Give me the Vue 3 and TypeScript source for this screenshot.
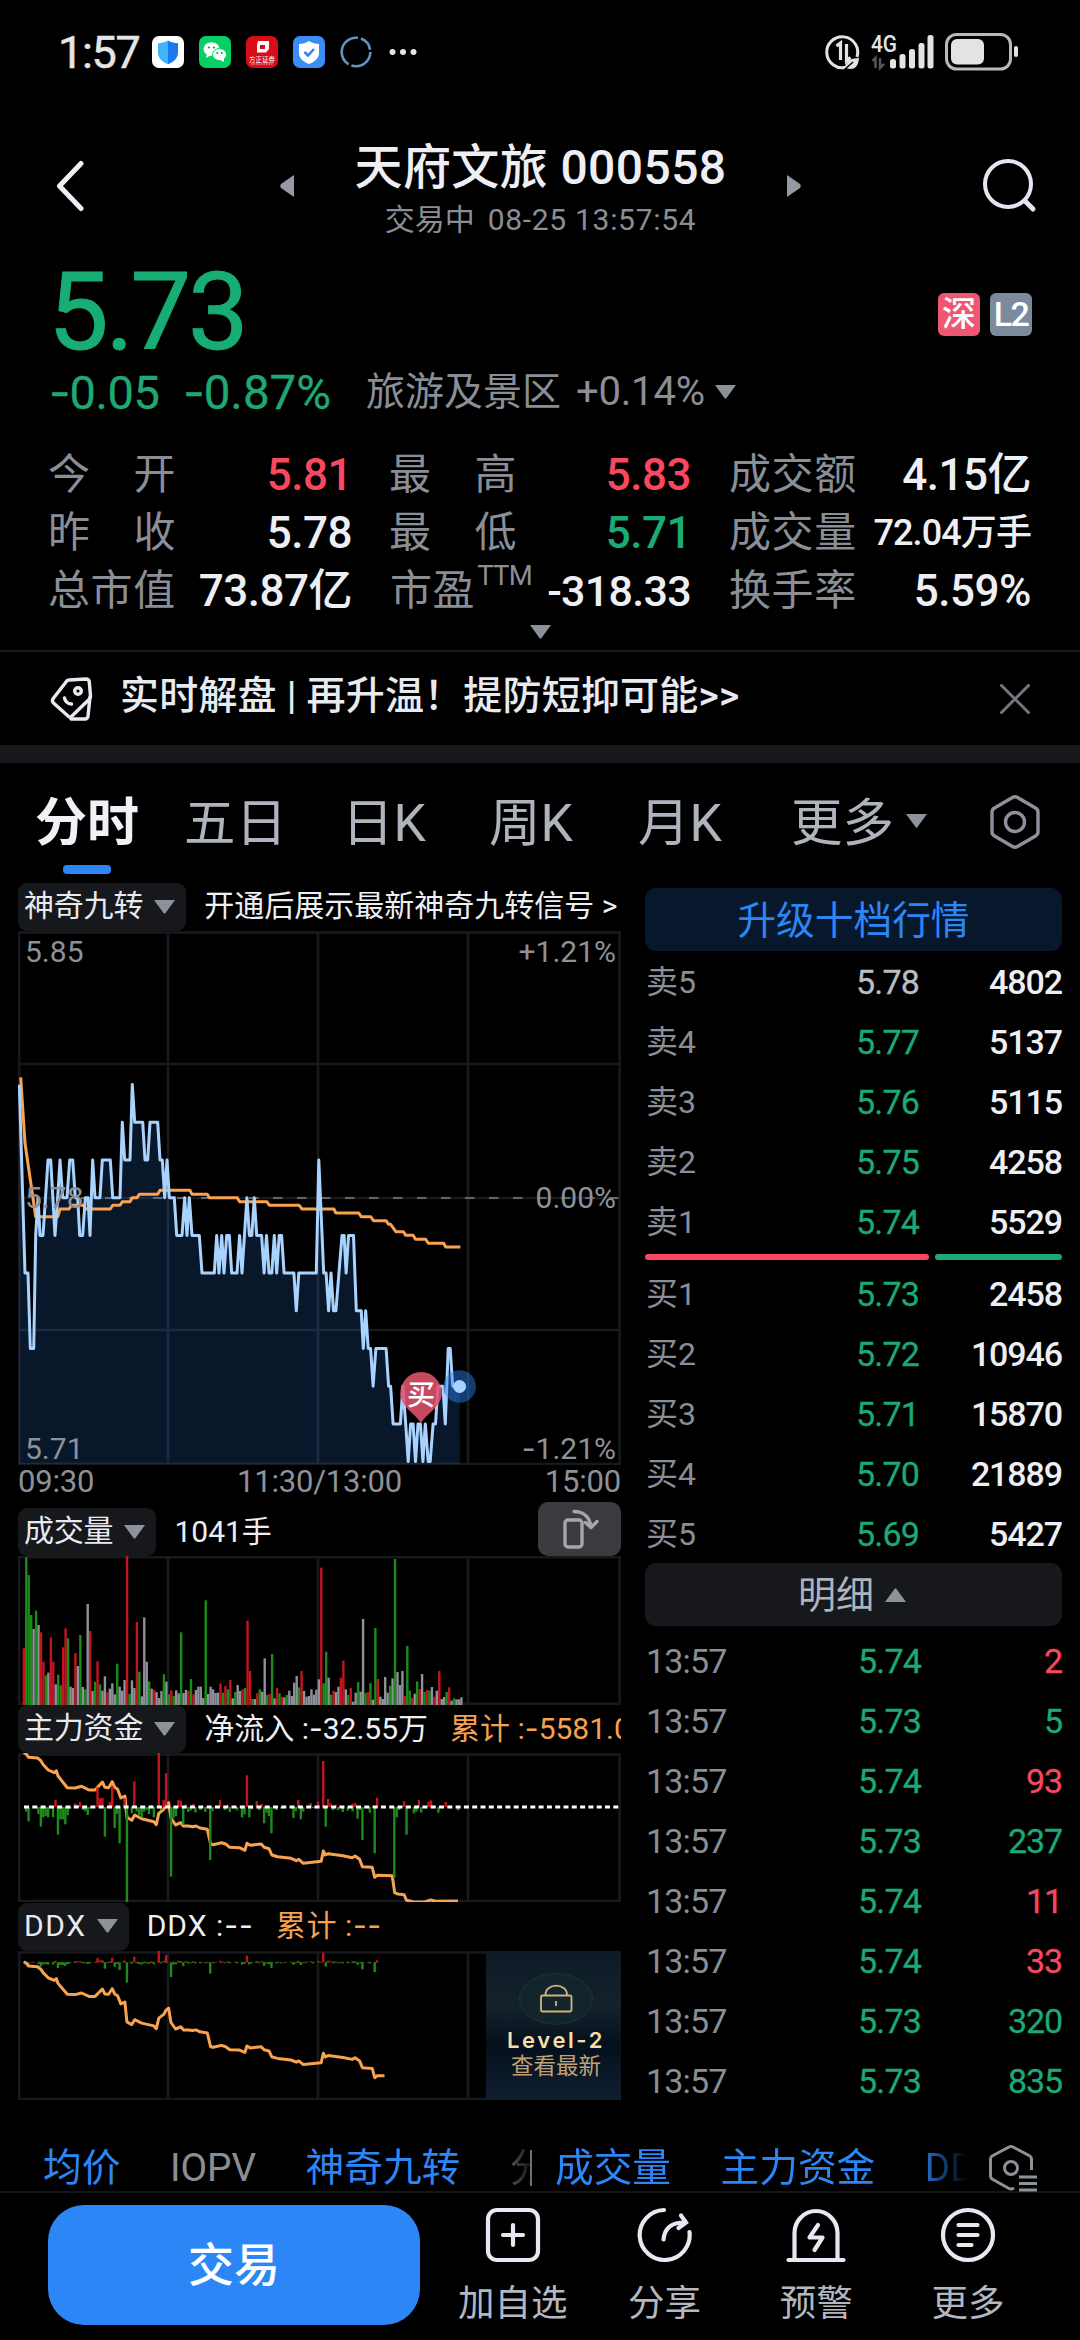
<script setup lang="ts">
interface Cell { label: string; value: string; tone: string; wide?: boolean; sup?: string; small?: boolean }
interface Level { name: string; price: string; qty: string; tone: string }
interface Bar { x: number; y: number; h: number; tone: string }

const cells: Cell[] = [
  { label: '今开', value: '5.81', tone: 'up', wide: true },
  { label: '最高', value: '5.83', tone: 'up', wide: true },
  { label: '成交额', value: '4.15亿', tone: 'plain' },
  { label: '昨收', value: '5.78', tone: 'plain', wide: true },
  { label: '最低', value: '5.71', tone: 'down', wide: true },
  { label: '成交量', value: '72.04万手', tone: 'plain', small: true },
  { label: '总市值', value: '73.87亿', tone: 'plain' },
  { label: '市盈', value: '-318.33', tone: 'plain', sup: 'TTM' },
  { label: '换手率', value: '5.59%', tone: 'plain' },
]

const asks: Level[] = [
  { name: '卖5', price: '5.78', qty: '4802', tone: 'flat' },
  { name: '卖4', price: '5.77', qty: '5137', tone: 'down' },
  { name: '卖3', price: '5.76', qty: '5115', tone: 'down' },
  { name: '卖2', price: '5.75', qty: '4258', tone: 'down' },
  { name: '卖1', price: '5.74', qty: '5529', tone: 'down' },
]
const bids: Level[] = [
  { name: '买1', price: '5.73', qty: '2458', tone: 'down' },
  { name: '买2', price: '5.72', qty: '10946', tone: 'down' },
  { name: '买3', price: '5.71', qty: '15870', tone: 'down' },
  { name: '买4', price: '5.70', qty: '21889', tone: 'down' },
  { name: '买5', price: '5.69', qty: '5427', tone: 'down' },
]
const ticks = [
  { price: '5.74', qty: '2', tone: 'up' },
  { price: '5.73', qty: '5', tone: 'down' },
  { price: '5.74', qty: '93', tone: 'up' },
  { price: '5.73', qty: '237', tone: 'down' },
  { price: '5.74', qty: '11', tone: 'up' },
  { price: '5.74', qty: '33', tone: 'up' },
  { price: '5.73', qty: '320', tone: 'down' },
  { price: '5.73', qty: '835', tone: 'down' },
]

const pairs = (s: string): number[][] => s.trim().split(/\s+/).map((p) => p.split(',').map(Number))
const join = (pts: number[][]): string => pts.map(([x, y]) => `${x.toFixed(1)},${y.toFixed(1)}`).join(' ')

/* Intraday price: time offset, cents away from the previous close. */
const CENT = 37.7
const morning = pairs(`58,3 75,-2 84,-2 91,-4 101,-4 107,-1 114,0 120,-1 129,-1 144,1 152,1 165,-1 173,0 180,1 188,0
 201,0 209,1 218,1 226,0 233,0 239,-1 248,-1 256,0 264,0 270,-1 278,1 285,0 300,0 307,1 331,1 338,0 360,0 367,2 374,1 390,1
 397,3 404,2 428,2 435,1 443,1 450,2 473,2 480,1 487,1 494,0 501,1 508,0 523,0 530,-1 546,-1 554,0 561,-1 568,0 576,-1 598,-1
 606,-2 643,-2 650,-1 657,-2 665,-1 672,-2 680,-1 688,-1 695,-2 711,-2`).map(([x, l]) => [x / 3, 1197.7 - l * CENT])
const later = pairs(`587,-1 593,-2 605,0 611,-1 617,-1 623,0 629,-1 641,-1 647,-2 653,-1 659,-2 666,-2 672,-1 678,-2 684,-1 690,-1
 696,-2 720,-2 726,-3 732,-2 775,-2 781,1 793,-2 799,-2 805,-3 811,-2 817,-3 823,-3 838,-1 843,-1 848,-2 854,-1 866,-1 873,-3
 885,-3 890,-4 896,-3 902,-4 908,-4 914,-5 921,-4 946,-4 952,-5 957,-5 963,-6 981,-6 987,-5 994,-6 1000,-7 1006,-6 1012,-6
 1018,-7 1024,-6 1030,-6 1036,-7 1042,-6 1049,-7 1054,-7 1061,-6 1067,-6 1073,-5 1085,-5 1091,-6 1098,-4 1103,-4 1109,-5 1126,-5`)
  .map(([x, l]) => [x / 2.45, 1197.7 - l * CENT])
const pricePts = [...morning, ...later]
const priceLine = join(pricePts)
const priceArea = `19,1464 ${priceLine} 460,1464`

const avgLine = join([
  ...pairs(`62,52 75,250 107,470 173,470 180,447 207,447 214,436 250,436 257,447 331,447 338,436 360,436 367,425 390,425
 397,413 411,413 418,403 473,403 480,391 570,391 576,403 622,403 628,413 712,413`).map(([x, y]) => [x / 3, 1060 + y / 3]),
  ...pairs(`587,65 654,65 660,76 733,76 740,87 818,87 823,99 879,99 885,110 908,110 915,122 946,122 952,133 957,133 970,155
 988,155 994,166 1012,166 1018,178 1043,178 1049,190 1087,190 1092,201 1128,201`).map(([x, y]) => [x / 2.45, 1180 + y / 3]),
])

/* One bar per minute: depth of the bar top, then r / g / w for rise, fall, flat. */
const volumes: Bar[] = `475r 202g 255g 375g 417w 362g 405w 427r 515r 556g 548w 442r 515r 583w 554g 586g 472r 415r 445g 590w
 594w 489r 528w 435g 591w 598g 342w 423r 603w 575g 514r 583g 602w 559w 607r 596w 580w 613w 521g 590w
 602w 570w 195r 612g 571w 594w 396r 545g 619w 382w 515w 574g 596w 600r 606w 624w 603w 553g 575w 613g
 601r 618g 601w 610w 427g 609w 600w 602r 567g 613r 600w 590w 590w 624w 331g 612w 590w 598w 609w 608w
 580r 608g 588r 598g 570r 625w 606g 585w 603w 598r 594g 392r 543r 627g 627w 610r 598g 605w 505w 615g
 612r 492g 625w 594r 610g 621r 622w 615g 602w 618w 578w 558w 592g 543r 603w 620w 618w 598w 614w 599w
 568w 233r 580g 485g 563w 614g 602r 606w 590w 563r 512r 598w 615g 594r 635w 608w 576g 605w 387w 609g
 606r 579g 629w 414g 567r 620w 627w 561w 608w 587g 565w 207g 546w 585w 543w 618r 468g 602g 624r 611w
 574g 597r 552w 606g 600r 602g 591w 620r 602w 543r 627w 621w 606g 592r 632w 625g 628w 628w 622w`
  .split(/\s+/).map((t, i) => {
    const h = (645 - parseInt(t, 10)) / 3
    return { x: 22.6 + i * 2.4585, y: 1705 - h, h, tone: t.slice(-1) }
  })

/* Net inflow per minute around the zero line. */
const flowRaw = pairs(`136,210 184,220 190,224 196,216 239,172 245,205 251,203 269,216 275,168 305,205 329,154 371,225 389,69
 401,210 407,130 437,210 443,212 455,224 473,222 539,210 557,224 605,136 629,213 641,222 731,210 761,219 779,215 792,93 804,207
 810,220 822,224 864,222 870,219 924,203 990,214 1026,210 1050,215 1056,211 1092,216 64,245 70,274 94,252 100,290 106,262
 112,258 118,262 130,262 142,314 148,268 154,268 160,283 166,256 172,236 203,240 209,244 215,255 221,236 257,320 263,234
 281,294 287,252 293,340 311,518 323,250 335,244 341,256 347,262 353,245 359,240 365,252 377,262 395,240 419,440 425,264
 431,258 449,284 461,246 467,242 479,248 491,240 503,246 515,390 521,244 551,240 563,246 581,241 593,262 599,253 611,262
 617,238 635,240 647,280 653,248 659,258 665,310 677,240 689,236 719,264 725,244 737,268 743,245 767,234 798,290 816,241
 828,240 840,246 852,242 864,244 876,266 882,240 888,330 906,248 918,370 966,444 972,262 978,240 996,314 1014,250 1020,245
 1032,248 1074,248 1122,241`)
const around = (zero: number, scale: number, limit: number): Bar[] =>
  flowRaw.filter(([x]) => x <= limit).map(([x, y]) => {
    const h = Math.max((Math.abs(y - 231) / 3) * scale, 1)
    return { x: x / 2.45 - 1.2, y: y < 231 ? zero - h : zero, h, tone: y < 231 ? 'r' : 'g' }
  })
const flowBars = around(1807, 1, 1200)
const ddxBars = around(1962.3, 0.213, 930)

const cumRaw = pairs(`58,68 64,72 70,82 92,84 100,92 106,104 118,120 133,128 138,122 142,138 165,173 184,174 200,169 218,180
 233,180 251,156 257,172 266,173 275,155 281,172 288,178 296,204 306,198 311,262 323,271 330,255 347,266 377,275 383,284
 389,250 401,238 407,224 413,218 419,264 430,285 443,278 449,288 461,288 472,290 480,288 490,294 508,298 516,342 522,344
 543,338 553,342 563,352 587,353 600,361 605,340 613,346 640,342 647,352 659,356 666,375 680,380 713,385 726,392 732,388
 743,400 787,394 792,363 797,375 804,371 840,377 863,383 870,378 881,388 888,410 912,412 918,442 924,436 961,437 967,488
 975,492 990,494 996,511 1012,515 1040,516 1056,510 1067,514 1122,513`)
const cumLine = join(cumRaw.map(([x, y]) => [x / 2.45, 1730 + y / 3]))
const ddxLine = join(cumRaw.filter(([x]) => x < 961).concat([[942, 436]])
  .map(([x, y]) => [x / 2.45, 1730 + (697 + (y - 70) * 0.93) / 3]))

const columns = [168, 318, 468]
</script>

<template>
  <div class="screen">
    <header class="status">
      <div class="status-left">
        <span class="clock">1:57</span>
        <svg class="app" viewBox="0 0 32 32"><rect width="32" height="32" rx="7" fill="#fff" /><path d="M16 4.500c3.400 2 6.600 2.500 10 2.800v9c0 6-4 9.500-10 12z" fill="#1b78ee" /><path d="M16 4.500c-3.400 2-6.600 2.500-10 2.800v9c0 6 4 9.500 10 12z" fill="#40b4f8" /></svg>
        <svg class="app" viewBox="0 0 32 32"><rect width="32" height="32" rx="7" fill="#06cf66" /><ellipse cx="12.500" cy="13" rx="8" ry="6.700" fill="#fff" /><path d="M7 22l1-5 4 2z" fill="#fff" /><ellipse cx="20.500" cy="18.500" rx="7" ry="6" fill="#fff" stroke="#06cf66" /><path d="M25 26l-4-2 4-2z" fill="#fff" /><circle cx="10" cy="11.500" r="1.100" fill="#06a050" /><circle cx="15" cy="11.500" r="1.100" fill="#06a050" /><circle cx="18.300" cy="17" r="1" fill="#06a050" /><circle cx="22.700" cy="17" r="1" fill="#06a050" /></svg>
        <svg class="app" viewBox="0 0 32 32"><rect width="32" height="32" rx="7" fill="#d80d18" /><path d="M12 5h11v8l-3 3.500h-9V9z" fill="#fff" /><path d="M14 9h5v4h-5z" fill="#d80d18" /><text x="16" y="25.500" font-size="6.500" fill="#fff" text-anchor="middle">方正证券</text><path d="M5 28h22" stroke="#fff" stroke-width=".8" stroke-dasharray="1.500 1" /></svg>
        <svg class="app" viewBox="0 0 32 32"><rect width="32" height="32" rx="7" fill="#3b8cf5" /><path d="M16 5c3 2 6.500 2.800 10 3v9c0 5.500-4.500 9-10 11-5.500-2-10-5.500-10-11V8c3.500-.2 7-1 10-3z" fill="#fff" /><path d="M11.500 16l3.500 3.500 6-6.500" fill="none" stroke="#2f7fee" stroke-width="2.500" /></svg>
        <svg class="app" viewBox="0 0 32 32"><circle cx="16" cy="16" r="14.300" fill="none" stroke="#6593bd" stroke-width="2.600" stroke-dasharray="27 3 39 3 15 2.800" /></svg>
        <svg class="dots" viewBox="0 0 28 8"><circle cx="3.500" cy="4" r="3" /><circle cx="14" cy="4" r="3" /><circle cx="24.500" cy="4" r="3" /></svg>
      </div>
      <svg class="status-right" viewBox="822 30 198 42">
        <g fill="none" stroke="#e3e3e3" stroke-width="3">
          <path d="M857 56A15.500 15.500 0 1 0 846 66.300" />
          <path d="M836.500 45l4-3v17M846.500 43v17l4-3.500" stroke-width="3.200" />
          <rect x="946.500" y="33.500" width="64" height="34.500" rx="10" stroke="#b9b9b9" />
        </g>
        <path d="M845 67c0-6 5-10 14-10-.5 8-4 11-9 11z" fill="#e3e3e3" /><path d="M844 69l9-8" stroke="#000" stroke-width="1.500" />
        <text x="871" y="51" font-size="23" font-weight="500" fill="#e3e3e3" textLength="26" lengthAdjust="spacingAndGlyphs">4G</text>
        <path d="M872.500 60l3-3v10M880 57v10l4-4" fill="none" stroke="#555" stroke-width="2.500" />
        <g fill="#e3e3e3"><rect x="890" y="58" width="6" height="9.500" rx="2.500" /><rect x="899.500" y="53" width="6" height="14.500" rx="2.500" /><rect x="909" y="48" width="6" height="19.500" rx="2.500" /><rect x="918.500" y="42" width="6" height="25.500" rx="2.500" /><rect x="927.500" y="34" width="6" height="33.500" rx="2.500" /><rect x="951" y="38" width="33" height="25.500" rx="6" /><rect x="1014" y="45" width="4" height="11" rx="2" /></g>
      </svg>
    </header>

    <nav class="nav">
      <svg class="back" viewBox="0 0 30 52"><path d="M26 3.500L4.500 26 26 48.500" fill="none" stroke="#eff0f5" stroke-width="5" stroke-linecap="round" stroke-linejoin="round" /></svg>
      <svg class="side" viewBox="0 0 14 22"><path d="M14 0v22L1 13q-1.500-2 0-4z" /></svg>
      <div class="title">
        <h1>天府文旅 000558</h1>
        <p>交易中<span>08-25 13:57:54</span></p>
      </div>
      <svg class="side" viewBox="0 0 14 22"><path d="M0 0v22L13 13q1.500-2 0-4z" /></svg>
      <svg class="search" viewBox="0 0 56 56"><circle cx="26" cy="26" r="23" fill="none" stroke="#e2e7f1" stroke-width="4" /><path d="M43 43l8 8" stroke="#e2e7f1" stroke-width="5" stroke-linecap="round" /></svg>
    </nav>

    <section class="quote">
      <div class="price-row">
        <strong>5.73</strong>
        <div class="badges"><span class="sz">深</span><span class="l2">L2</span></div>
      </div>
      <div class="change-row">
        <span class="delta"><i class="dash">-</i>0.05</span><span class="delta pct"><i class="dash">-</i>0.87%</span>
        <span class="sector">旅游及景区</span><span class="sector-pct">+0.14%</span>
        <svg class="tri" viewBox="0 0 21 14"><path d="M0 0h21L11.500 13q-1 1.500-2 0z" /></svg>
      </div>
      <div class="cells">
        <div v-for="c in cells" :key="c.label" class="cell">
          <span class="label" :class="{ wide: c.wide }">
            <template v-if="c.wide"><i>{{ c.label[0] }}</i><i>{{ c.label[1] }}</i></template>
            <template v-else>{{ c.label }}<sup v-if="c.sup">{{ c.sup }}</sup></template>
          </span>
          <b :class="[c.tone, { small: c.small, mid: c.sup }]">{{ c.value }}</b>
        </div>
      </div>
      <svg class="tri expand" viewBox="0 0 21 14"><path d="M0 0h21L11.500 13q-1 1.500-2 0z" /></svg>
    </section>

    <section class="notice">
      <svg class="tag" viewBox="0 0 44 46"><g fill="none" stroke="#e8eaf2" stroke-width="3.400" stroke-linejoin="round" stroke-linecap="round"><path d="M20 4l17-1q3 0 3.300 3l1.200 14q0 2-1 3L23 40q-2 2-4 0L4.500 27q-2-2-.3-4.500L17 6q1-2 3-2z" /><path d="M41 21l-2 19q-.5 3-3 3H22" /><circle cx="29" cy="15" r="3.300" /><path d="M15.500 22q1 5.500 7 6" /></g></svg>
      <span>实时解盘 | 再升温！提防短抑可能&gt;&gt;</span>
      <svg class="close" viewBox="0 0 30 30"><path d="M1.500 1.500l27 27m0-27l-27 27" stroke="#73777f" stroke-width="3" stroke-linecap="round" /></svg>
    </section>
    <div class="band"></div>

    <nav class="tabs">
      <span class="tab active">分时</span><span class="tab">五日</span><span class="tab">日K</span><span class="tab">周K</span><span class="tab">月K</span>
      <span class="tab more">更多<svg class="tri" viewBox="0 0 21 14"><path d="M0 0h21L11.500 13q-1 1.500-2 0z" /></svg></span>
      <svg class="hex" viewBox="0 0 52 56"><g fill="none" stroke="#8d9199" stroke-width="3.400" stroke-linejoin="round"><path d="M23.500 3.500q2.500-1.500 5 0l18 10.500q2.500 1.500 2.500 4v20q0 2.500-2.500 4l-18 10.500q-2.500 1.500-5 0l-18-10.500Q3 40.500 3 38V18q0-2.500 2.500-4z" /><circle cx="26" cy="28" r="9.500" /></g></svg>
    </nav>

    <main class="main">
      <div class="charts">
        <div class="bar-row first">
          <span class="pill">神奇九转<svg class="tri" viewBox="0 0 21 14"><path d="M0 0h21L11.500 13q-1 1.500-2 0z" /></svg></span>
          <span class="info">开通后展示最新神奇九转信号 &gt;</span>
        </div>
        <svg class="chart price" viewBox="18 931 603 534">
          <g class="grid"><rect x="19.200" y="932.500" width="600.400" height="531.500" /><path v-for="x in columns" :key="x" :d="`M${x} 933V1464`" /><path d="M19 1064H620M19 1198H620M19 1330H620" /></g>
          <path d="M81 1198H620" stroke="#62656c" stroke-width="2.200" stroke-dasharray="9.500 14.500" />
          <polygon :points="priceArea" fill="rgba(45,134,246,.17)" />
          <polyline :points="avgLine" class="avg" />
          <polyline :points="priceLine" class="px" />
          <g class="axis">
            <text x="25" y="962">5.85</text><text x="25" y="1208">5.78</text><text x="25" y="1459">5.71</text>
            <text x="616" y="962" text-anchor="end">+1.21%</text><text x="616" y="1208" text-anchor="end">0.00%</text><text x="616" y="1459" text-anchor="end"><tspan class="dash">-</tspan>1.21%</text>
          </g>
          <path d="M421 1423C415 1413 400.300 1407 400.300 1393a20.700 21 0 0 1 41.400 0C441.700 1407 427 1413 421 1423z" fill="#e0546d" fill-opacity=".88" />
          <text x="421" y="1404.500" text-anchor="middle" font-size="28" font-weight="500" fill="#fff">买</text>
          <circle cx="459.600" cy="1386.500" r="16.300" fill="#2d86f6" fill-opacity=".45" /><circle cx="459.600" cy="1386.500" r="6.500" fill="#a9d3ff" />
        </svg>
        <div class="times"><span>09:30</span><span>11:30/13:00</span><span>15:00</span></div>

        <div class="bar-row">
          <span class="pill">成交量<svg class="tri" viewBox="0 0 21 14"><path d="M0 0h21L11.500 13q-1 1.500-2 0z" /></svg></span>
          <span class="info">1041手</span>
          <span class="rotate"><svg viewBox="0 0 40 42"><g fill="none" stroke="#a5a7ac" stroke-width="3.400" stroke-linejoin="round" stroke-linecap="round"><rect x="5" y="12" width="17" height="27" rx="3" /><path d="M14 3.500c10 0 16 6 17 16M25.500 14.500l5.500 5 6-6" /></g></svg></span>
        </div>
        <svg class="chart sub" viewBox="18 1556 603 149">
          <g class="grid"><rect x="19.200" y="1557.200" width="600.400" height="146.500" /><path v-for="x in columns" :key="x" :d="`M${x} 1557V1704`" /></g>
          <rect v-for="(b, i) in volumes" :key="i" :x="b.x" :y="b.y" width="2.400" :height="b.h" :class="b.tone" />
        </svg>

        <div class="bar-row flow-row">
          <span class="pill">主力资金<svg class="tri" viewBox="0 0 21 14"><path d="M0 0h21L11.500 13q-1 1.500-2 0z" /></svg></span>
          <span class="info">净流入 :<i class="dash">-</i>32.55万</span><span class="info orange">累计 :<i class="dash">-</i>5581.0</span>
        </div>
        <svg class="chart sub" viewBox="18 1753 603 149">
          <g class="grid"><rect x="19.200" y="1754.500" width="600.400" height="146.500" /><path v-for="x in columns" :key="x" :d="`M${x} 1754V1902`" /></g>
          <polyline :points="cumLine" class="avg" />
          <rect v-for="(b, i) in flowBars" :key="i" :x="b.x" :y="b.y" width="2.400" :height="b.h" :class="b.tone" />
          <path d="M24 1807H621" stroke="#fff" stroke-width="2.800" stroke-dasharray="5 3.300" />
        </svg>

        <div class="bar-row ddx-row">
          <span class="pill">DDX<svg class="tri" viewBox="0 0 21 14"><path d="M0 0h21L11.500 13q-1 1.500-2 0z" /></svg></span>
          <span class="info">DDX :<i class="dash">--</i></span><span class="info orange">累计 :<i class="dash">--</i></span>
        </div>
        <div class="ddx">
          <svg class="chart ddx-plot" viewBox="18 1951 468 149">
            <path class="grid" d="M486 1952.500H19.200V2099H486M168 1952V2099M318 1952V2099M468 1952V2099" />
            <path d="M24 1962.300H380" stroke="#5e3a1c" stroke-width="1" stroke-dasharray="4 3" />
            <rect v-for="(b, i) in ddxBars" :key="i" :x="b.x" :y="b.y" width="2.400" :height="b.h" :class="b.tone" />
            <polyline :points="ddxLine" class="avg" />
          </svg>
          <div class="level2">
            <svg viewBox="0 0 76 54"><ellipse cx="38" cy="27" rx="36.500" ry="25.300" fill="#13252c" stroke="#1f3239" /><g fill="none" stroke="#d2b27d" stroke-width="1.800"><rect x="23" y="23.500" width="30.500" height="16" rx="1.500" /><path d="M27.500 23c0-12.500 21.500-12.500 21.500 0M38 29v5" /></g></svg>
            <strong>Level-2</strong><span>查看最新</span>
          </div>
        </div>
      </div>

      <aside class="book">
        <div class="upgrade">升级十档行情</div>
        <div class="rows">
          <div v-for="l in asks" :key="l.name" class="row"><span>{{ l.name }}</span><b :class="l.tone">{{ l.price }}</b><em>{{ l.qty }}</em></div>
        </div>
        <div class="ratio"><i></i><i></i></div>
        <div class="rows">
          <div v-for="l in bids" :key="l.name" class="row"><span>{{ l.name }}</span><b :class="l.tone">{{ l.price }}</b><em>{{ l.qty }}</em></div>
        </div>
        <div class="detail">明细<svg class="tri" viewBox="0 0 21 14"><path d="M0 14h21L11.500 1q-1-1.500-2 0z" /></svg></div>
        <div class="rows ticks">
          <div v-for="(t, i) in ticks" :key="i" class="row"><span>13:57</span><b class="down">{{ t.price }}</b><em :class="t.tone">{{ t.qty }}</em></div>
        </div>
      </aside>
    </main>

    <div class="chips">
      <div class="chip-group main-group"><span class="on">均价</span><span>IOPV</span><span class="on">神奇九转</span><span class="next">分</span></div>
      <div class="chip-group sub-group"><span class="on">成交量</span><span class="on">主力资金</span><span class="on">DD</span></div>
      <svg class="set" viewBox="0 0 50 48"><g fill="none" stroke="#8d9199" stroke-width="3"><path d="M43.500 26V15q0-2-2-3.200L25 3q-2-1.200-4 0L4.500 11.800q-2 1.200-2 3.200v17q0 2 2 3.200L21 44.500q2 1.200 5-.5" /><circle cx="23" cy="24" r="6.500" /><path d="M31 33h18M31 39.500h18M31 46h18" /></g></svg>
    </div>

    <footer class="footer">
      <div class="trade">交易</div>
      <div class="action"><svg viewBox="0 0 60 56"><g class="ico"><rect x="5" y="3" width="50" height="50" rx="9" /><path d="M30 18v20M20 28h20" /></g></svg>加自选</div>
      <div class="action"><svg viewBox="0 0 60 56"><g class="ico"><path d="M29 3A25 25 0 1 0 54.500 25" /><path d="M28.500 32.500C29.500 22 36 15.500 49 15.500M46 8.500l5 7-7.500 5.500" /></g></svg>分享</div>
      <div class="action"><svg viewBox="0 0 60 56"><g class="ico"><path d="M2.500 53h55M8.500 53V26a21.500 22 0 0 1 43 0v27" /><path d="M32 18l-8.500 12.500h13L28.500 43" stroke-linejoin="round" /></g></svg>预警</div>
      <div class="action"><svg viewBox="0 0 60 56"><g class="ico"><circle cx="30" cy="28" r="25" /><path d="M20.500 18h19M20.500 28h19M20.500 38h13" /></g></svg>更多</div>
    </footer>
  </div>
</template>

<style>
body { background: #000; }
</style>

<style scoped>
.screen {
  width: 1080px; height: 2340px; background: #000; overflow: hidden; color: #eeeff5;
  font-family: Roboto, "Noto Sans CJK SC", sans-serif; display: flex; flex-direction: column;
}
.screen * { box-sizing: border-box; }
svg { display: block; flex: none; }
i, em { font-style: normal; }
.dash { font-family: Inter, sans-serif; }
.up { color: #f8475f; } .down { color: #1ba975; } .flat { color: #b9bcc4; } .plain { color: #eeeff5; }
.tri { width: 21px; height: 14px; fill: #8d9199; }

.status { height: 104px; padding: 0 60px 0 58px; display: flex; align-items: center; justify-content: space-between; }
.status-left { display: flex; align-items: center; gap: 15px; }
.clock { font-size: 45px; line-height: 52px; width: 79px; letter-spacing: -1.300px; white-space: nowrap; color: #e5e5e5; -webkit-text-stroke: .5px currentColor; padding-top: 1px; }
.app { width: 32px; height: 32px; }
.dots { width: 28px; height: 8px; fill: #e5e5e5; margin-left: 2px; }
.status-right { width: 198px; height: 42px; }

.nav { height: 146px; display: grid; grid-template-columns: 280px 14px 493px 14px 1fr; align-items: center; padding-top: 18px; }
.back { width: 30px; height: 52px; margin-left: 55px; }
.side { width: 14px; height: 22px; fill: #9599a3; }
.title { text-align: center; height: 92px; }
.title h1 { margin: -2px 0 0; font-size: 48px; line-height: 60px; font-weight: 500; letter-spacing: .4px; }
.title p { margin: 2px 0 0; font-size: 30px; line-height: 40px; color: #8a8e97; }
.title p span { margin-left: 13px; letter-spacing: .7px; }
.search { width: 56px; height: 56px; margin-left: 181px; }

.quote { height: 402px; border-bottom: 2px solid #18191e; padding: 9px 48px 0 49px; display: flex; flex-direction: column; }
.price-row { height: 106px; display: flex; justify-content: space-between; align-items: center; }
.price-row strong { font-size: 108px; line-height: 106px; font-weight: 400; color: #17ad74; letter-spacing: -3.300px; margin-left: -1px; -webkit-text-stroke: 1px currentColor; }
.badges { display: flex; gap: 10px; margin-top: 4px; }
.badges span { width: 42px; height: 43px; border-radius: 6px; line-height: 43px; text-align: center; font-size: 34px; font-weight: 500; color: #fff; }
.sz { background: #ee5673; } .l2 { background: #7c8a9d; letter-spacing: -1.500px; }
.change-row { height: 54px; display: flex; align-items: center; color: #8a8e97; line-height: 56px; white-space: nowrap; }
.delta { font-size: 47px; color: #1fa873; width: 134px; letter-spacing: -.4px; -webkit-text-stroke: .3px currentColor; }
.delta .dash { letter-spacing: -1.200px; }
.pct { width: 183px; font-size: 47.500px; letter-spacing: 0; }
.sector { font-size: 39px; width: 210px; }
.sector-pct { font-size: 40px; letter-spacing: -.2px; width: 139px; }
.cells { margin-top: 27px; display: grid; grid-template-columns: 303px 301px 302px; column-gap: 38px; grid-auto-rows: 58px; }
.cell { display: flex; justify-content: space-between; align-items: center; line-height: 58px; white-space: nowrap; }
.label { color: #8a8e97; font-size: 42px; letter-spacing: .6px; display: flex; }
.label.wide { width: 128px; justify-content: space-between; }
.label sup { font-size: 27.500px; line-height: 28px; margin: 0 0 0 2px; letter-spacing: -.8px; font-weight: 400; }
.cell b { font-size: 44px; font-weight: 500; letter-spacing: -.5px; }
.cell b.small { font-size: 36px; letter-spacing: -.9px; }
.cell b.mid { font-size: 43px; letter-spacing: -.7px; }
.cell:nth-child(-n+7):not(:nth-child(3n)) .label { margin-left: -1px; }
.expand { margin: 5px auto 0; }

.notice { height: 93px; padding: 0 50px 0 49px; display: flex; align-items: center; }
.tag { width: 44px; height: 46px; }
.notice span { flex: 1; margin-left: 27px; font-size: 39px; line-height: 50px; margin-top: -6px; font-weight: 500; color: #e8eaf2; letter-spacing: .2px; }
.close { width: 30px; height: 30px; }
.band { height: 18px; background: #16181c; }

.tabs { height: 120px; display: grid; grid-template-columns: 184px 158px 147px 149px 153px 197px 1fr; color: #aeb3bc; font-size: 51.500px; line-height: 122px; white-space: nowrap; }
.tab.active { font-weight: 700; color: #f0f1f6; padding-left: 35px; font-size: 52px; display: flex; flex-direction: column; align-items: flex-start; height: 120px; }
.tab.active::after { content: ""; width: 48px; height: 9px; border-radius: 4px; background: #2d86f6; margin: -20px 0 0 28px; }
.more { display: flex; align-items: center; gap: 12px; height: 122px; }
.more .tri { margin-top: -6px; }
.hex { width: 52px; height: 56px; margin-top: 31px; margin-left: 1px; }

.main { height: 1241px; padding: 0 18px; display: flex; justify-content: space-between; }
.charts { width: 603px; display: flex; flex-direction: column; }
.bar-row { height: 49px; display: flex; align-items: center; overflow: hidden; font-size: 30px; white-space: nowrap; line-height: 40px; }
.first, .flow-row { height: 48px; flex: none; }
.pill { height: 48px; display: flex; align-items: center; gap: 11px; background: #16181c; border-radius: 9px; padding: 0 11px 2px 6px; font-size: 30px; letter-spacing: -.2px; color: #e9eaf0; flex: none; }
.pill .tri { margin-top: 1px; }
.info { margin-left: 18px; padding-bottom: 2px; color: #eeeff5; flex: none; letter-spacing: 0; }
.orange { color: #f7a14f; margin-left: 22px; }
.ddx-row .pill { letter-spacing: 1.600px; gap: 10px; }
.ddx-row .info { letter-spacing: 1px; }
.ddx-row .orange { letter-spacing: .6px; }
.chart { width: 603px; flex: none; }
.price { height: 534px; }
.sub { height: 149px; }
.grid, .grid * { fill: none; stroke: #18191e; stroke-width: 2.600; }
.avg { fill: none; stroke: #f9a24f; stroke-width: 3; stroke-linejoin: round; }
.px { fill: none; stroke: #a9d3ff; stroke-width: 3; stroke-linejoin: round; }
.axis { font-size: 30px; fill: #8d9199; }
.r { fill: #c4151f; } .g { fill: #1b8c1b; } .w { fill: #8d9199; }
.times { height: 36px; display: flex; justify-content: space-between; font-size: 31px; line-height: 34px; color: #8d9199; letter-spacing: -.2px; margin-bottom: 6px; }
.rotate { margin-left: auto; width: 83px; height: 54px; background: #3a3b3f; border-radius: 10px; display: flex; align-items: center; justify-content: center; }
.rotate svg { width: 40px; height: 42px; }
.times + .bar-row { height: 55px; margin-top: -6px; align-items: flex-end; }
.times + .bar-row .info { line-height: 45px; }
.ddx { display: flex; height: 149px; }
.ddx-plot { width: 468px; height: 149px; }
.level2 { width: 135px; height: 149px; background: linear-gradient(#0d1b27, #15222c 38%, #04101c 62%, #101f30); display: flex; flex-direction: column; align-items: center; padding: 21px 0 0 5px; }
.level2 svg { width: 76px; height: 54px; }
.level2 strong { font: 600 22px/26px Inter, sans-serif; letter-spacing: 2.600px; color: #f3dfab; margin-top: 1px; white-space: nowrap; }
.level2 span { font-size: 22.500px; line-height: 26px; color: #c2a272; white-space: nowrap; }

.book { width: 417px; padding-top: 5px; }
.upgrade, .detail { height: 63px; border-radius: 11px; display: flex; align-items: center; justify-content: center; font-size: 38.700px; line-height: 50px; }
.upgrade { background: #07182c; color: #2d86f6; padding: 2px 0 0; }
.rows { padding-top: 1px; }
.row { height: 60px; display: grid; grid-template-columns: 211px 80px 1fr; align-items: center; font-size: 34px; line-height: 60px; color: #8a8e97; }
.row span { font-size: 32px; padding-left: 1px; }
.row b { font-weight: 400; letter-spacing: -.8px; -webkit-text-stroke: .3px currentColor; }
.row em { text-align: right; font-weight: 500; letter-spacing: -1.100px; padding-right: 0; }
.row em:not(.up):not(.down) { color: #eeeff5; }
.ratio { display: flex; gap: 6px; height: 6px; margin-top: 2px; }
.ratio i { border-radius: 3px; background: #f8475f; width: 284px; }
.ratio i + i { background: #1ba975; flex: 1; }
.ratio + .rows { padding-top: 4px; }
.detail { background: #16181c; color: #aeb3bc; gap: 11px; margin-top: -1px; font-size: 38px; padding: 1px 3px 0 0; }
.detail .tri { margin-top: 0; }
.ticks { padding-top: 5px; }
.ticks .row { grid-template-columns: 213px 80px 1fr; }
.ticks .row span { font-size: 34px; letter-spacing: -.8px; padding-left: 1px; }
.row.row em.up, .row.row em.down { font-weight: 400; -webkit-text-stroke: .3px currentColor; }

.chips { height: 69px; border-bottom: 2px solid #141518; display: flex; align-items: center; font-size: 38.700px; line-height: 50px; color: #8a8e97; padding-top: 20px; }
.chip-group { display: flex; overflow: hidden; white-space: nowrap; flex: none; height: 50px; gap: 49.500px; }
.chip-group span { flex: none; }
.on { color: #2d86f6; }
.main-group { width: 487px; margin-left: 43px; }
.next { width: 20px; overflow: hidden; -webkit-mask-image: linear-gradient(90deg, rgba(0,0,0,.6), rgba(0,0,0,.15)); mask-image: linear-gradient(90deg, rgba(0,0,0,.6), rgba(0,0,0,.15)); }
.sub-group { width: 438px; padding-left: 25px; background: linear-gradient(#6d7078, #6d7078) 0 50% / 2px 36px no-repeat; -webkit-mask-image: linear-gradient(90deg, #000 88%, transparent 100%); mask-image: linear-gradient(90deg, #000 88%, transparent 100%); }
.set { width: 50px; height: 48px; margin-left: 20px; }

.footer { flex: 1; padding: 12px 36px 0 48px; display: flex; }
.trade { width: 372px; height: 120px; border-radius: 36px; background: #2d86f6; color: #fff; font-size: 46px; font-weight: 500; line-height: 120px; text-align: center; margin-right: 17px; }
.action { width: 151.700px; text-align: center; font-size: 36.500px; line-height: 42px; color: #b3b7bf; padding-top: 2px; }
.action svg { width: 60px; height: 56px; margin: 0 auto 20px; }
.ico, .ico * { fill: none; stroke: #e6e9f1; stroke-width: 4.200; stroke-linecap: round; }
</style>
